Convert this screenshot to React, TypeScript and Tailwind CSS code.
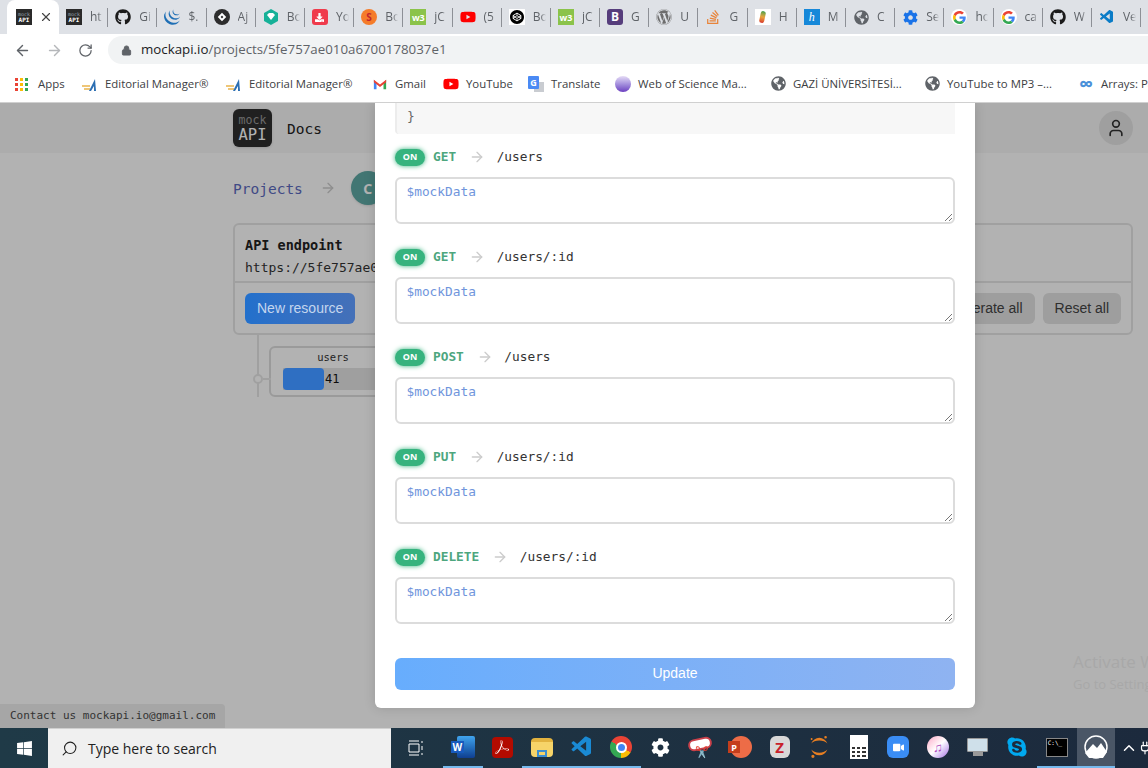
import { ReactNode } from "react";
import { ArrowRight, ArrowLeft, RotateCw, Lock, X, User, ChevronUp, Search, Plug } from "lucide-react";
import { FaGithub, FaYoutube, FaWordpress, FaStackOverflow, FaSkype, FaWindows, FaCog, FaGlobeAmericas, FaVideo, FaDownload } from "react-icons/fa";
import { SiCodepen, SiJquery, SiAdobeacrobatreader, SiJupyter } from "react-icons/si";
import { VscVscode } from "react-icons/vsc";

const chrome = "font-['Open_Sans',sans-serif]";
const mono = "font-['DejaVu_Sans_Mono',monospace]";

function MockLogo({ small = false }: { small?: boolean }) {
   if (small) {
      return (
         <span className={`flex h-4 w-4 flex-col items-center justify-center bg-[#2a2a2a] leading-none ${mono}`}>
            <span className="text-[5px] text-gray-400">mock</span>
            <span className="text-[6px] font-bold text-white">API</span>
         </span>
      );
   }
   return (
      <span className={`flex h-[38px] w-[39px] flex-col items-center justify-center rounded-md bg-[#2f2f2f] shadow ${mono}`}>
         <span className="text-[11.6px] leading-[14px] text-[#9a9a9a]">mock</span>
         <span className="text-[15.5px] leading-[17px] text-white">API</span>
      </span>
   );
}

function W3() {
   return <span className="flex h-4 w-4 items-center justify-center bg-[#8bc34a] text-[9px] font-bold leading-none text-white">w3</span>;
}

function GoogleG() {
   return (
      <span className="flex h-4 w-4 items-center justify-center rounded-full bg-white">
         <svg viewBox="0 0 48 48" className="h-[13px] w-[13px]">
            <path fill="#EA4335" d="M24 9.5c3.5 0 6.700 1.200 9.200 3.600l6.900-6.900C35.900 2.400 30.500 0 24 0 14.600 0 6.500 5.400 2.600 13.200l8 6.200C12.500 13.600 17.800 9.500 24 9.500z" />
            <path fill="#4285F4" d="M47 24.500c0-1.600-.1-3.100-.4-4.500H24v9h12.900c-.6 3-2.200 5.500-4.800 7.200l7.700 6c4.500-4.200 7.200-10.300 7.200-17.700z" />
            <path fill="#FBBC05" d="M10.600 28.600c-.5-1.400-.8-3-.8-4.600s.3-3.200.8-4.600l-8-6.200C.9 16.500 0 20.100 0 24s.9 7.500 2.600 10.800z" />
            <path fill="#34A853" d="M24 48c6.500 0 11.900-2.100 15.800-5.800l-7.700-6c-2.100 1.400-4.900 2.300-8.100 2.300-6.200 0-11.500-4.100-13.400-9.900l-8 6.200C6.500 42.600 14.600 48 24 48z" />
         </svg>
      </span>
   );
}

function EditorialIcon() {
   return (
      <svg viewBox="0 0 16 16" className="h-4 w-4">
         <path d="M0 10h8M2 13h6" stroke="#e9b44c" strokeWidth="1.500" fill="none" />
         <path d="M13 3 7 15h2l3-5v5h2z" fill="#2c6fb3" />
      </svg>
   );
}

function GmailIcon() {
   return (
      <svg viewBox="0 0 16 16" className="h-[14px] w-[14px]">
         <path d="M1 3v11h3V7z" fill="#4285f4" />
         <path d="M15 3v11h-3V7z" fill="#34a853" />
         <path d="M1 3l7 5.500L15 3v3L8 11.500 1 6z" fill="#ea4335" />
      </svg>
   );
}

function TranslateIcon() {
   return (
      <span className="relative block h-4 w-4">
         <span className="absolute bottom-0 right-0 h-[10px] w-[10px] bg-[#c9ccd1]" />
         <span className="absolute left-0 top-0 flex h-[13px] w-[11px] items-center justify-center rounded-[1px] bg-[#4a8af4] text-[9px] font-bold leading-none text-white">G</span>
      </span>
   );
}

const globe = <FaGlobeAmericas className="h-[15px] w-[15px] text-[#5f6368]" />;

const tabs: { icon: ReactNode; text: string }[] = [
   { icon: <MockLogo small />, text: "ht" },
   { icon: <FaGithub className="h-4 w-4 text-[#1b1b1b]" />, text: "Gi" },
   { icon: <SiJquery className="h-4 w-4 text-[#1f6fb5]" />, text: "$." },
   {
      icon: (
         <span className="flex h-4 w-4 items-center justify-center rounded-full bg-[#2d2d2d]">
            <span className="h-[6px] w-[6px] rotate-45 border-2 border-white" />
         </span>
      ),
      text: "Aj",
   },
   {
      icon: (
         <svg viewBox="0 0 16 16" className="h-4 w-4">
            <path d="M8 0l7 4v8l-7 4-7-4V4z" fill="#16b198" />
            <path d="M4 6l2-2h4l2 2-4 5z" fill="#fff" />
         </svg>
      ),
      text: "Bo",
   },
   {
      icon: (
         <span className="flex h-4 w-4 items-center justify-center rounded-[3px] bg-[#ef3b4c]">
            <FaDownload className="h-[9px] w-[9px] text-white" />
         </span>
      ),
      text: "Yo",
   },
   { icon: <span className="flex h-4 w-4 items-center justify-center rounded-full bg-[#f57c2a] text-[10px] font-bold leading-none text-[#c2262e]">S</span>, text: "Bo" },
   { icon: <W3 />, text: "jC" },
   { icon: <FaYoutube className="h-4 w-4 text-[#f00]" />, text: "(5" },
   {
      icon: (
         <span className="flex h-4 w-4 items-center justify-center bg-white">
            <SiCodepen className="h-[14px] w-[14px] text-black" />
         </span>
      ),
      text: "Bo",
   },
   { icon: <W3 />, text: "jC" },
   { icon: <span className="flex h-4 w-4 items-center justify-center rounded-[3px] bg-[#563d7c] text-[12px] font-bold leading-none text-white">B</span>, text: "G" },
   { icon: <FaWordpress className="h-4 w-4 text-[#6d6d6d]" />, text: "U" },
   { icon: <FaStackOverflow className="h-4 w-4 text-[#e8843a]" />, text: "G" },
   {
      icon: (
         <span className="flex h-4 w-4 items-center justify-center bg-white">
            <span className="h-3 w-[5px] rotate-12 rounded-full bg-gradient-to-b from-[#2e9e4b] via-[#e8a33d] to-[#d6322c]" />
         </span>
      ),
      text: "H",
   },
   { icon: <span className="flex h-4 w-4 items-center justify-center bg-[#1688d9] font-['Liberation_Serif',serif] text-[12px] italic leading-none text-white">h</span>, text: "M" },
   { icon: globe, text: "C" },
   { icon: <FaCog className="h-[15px] w-[15px] text-[#1a73e8]" />, text: "Se" },
   { icon: <GoogleG />, text: "ho" },
   { icon: <GoogleG />, text: "ca" },
   { icon: <FaGithub className="h-4 w-4 text-[#1b1b1b]" />, text: "W" },
   { icon: <VscVscode className="h-4 w-4 text-[#0a7cc7]" />, text: "Ve" },
];

const bookmarks: { icon: ReactNode; text: string; width: string }[] = [
   { icon: <EditorialIcon />, text: "Editorial Manager®", width: "w-[144px]" },
   { icon: <EditorialIcon />, text: "Editorial Manager®", width: "w-[146px]" },
   { icon: <GmailIcon />, text: "Gmail", width: "w-[71px]" },
   { icon: <FaYoutube className="h-4 w-4 text-[#f00]" />, text: "YouTube", width: "w-[85px]" },
   { icon: <TranslateIcon />, text: "Translate", width: "w-[87px]" },
   { icon: <span className="h-4 w-4 rounded-full bg-gradient-to-b from-[#e6dcf5] to-[#6d3fc0]" />, text: "Web of Science Ma...", width: "w-[155px]" },
   { icon: globe, text: "GAZİ ÜNİVERSİTESİ...", width: "w-[154px]" },
   { icon: globe, text: "YouTube to MP3 –...", width: "w-[154px]" },
   { icon: <span className="text-[20px] font-bold leading-none text-[#4a90d9]">∞</span>, text: "Arrays: Pa", width: "w-[80px]" },
];

const endpoints = [
   { method: "GET", path: "/users" },
   { method: "GET", path: "/users/:id" },
   { method: "POST", path: "/users" },
   { method: "PUT", path: "/users/:id" },
   { method: "DELETE", path: "/users/:id" },
];

const taskbarIcons: { icon: ReactNode; active?: boolean }[] = [
   {
      icon: (
         <span className="relative block h-[22px] w-[24px]">
            <span className="absolute right-0 top-0 h-full w-[18px] rounded-[2px] bg-gradient-to-b from-[#41a5ee] to-[#103f91]" />
            <span className="absolute left-0 top-[5px] flex h-[12px] w-[13px] items-center justify-center bg-[#185abd] text-[10px] font-bold leading-none text-white">W</span>
         </span>
      ),
      active: true,
   },
   {
      icon: (
         <span className="flex h-[21px] w-[21px] items-center justify-center rounded-[4px] bg-[#b30b00]">
            <SiAdobeacrobatreader className="h-[14px] w-[14px] text-white" />
         </span>
      ),
   },
   {
      icon: (
         <span className="flex h-[19px] w-[22px] items-end justify-center rounded-sm border-t-4 border-[#e2b33f] bg-[#f6d469]">
            <span className="h-[7px] w-[10px] border-2 border-[#3b8ed0]" />
         </span>
      ),
      active: true,
   },
   { icon: <VscVscode className="h-6 w-6 text-[#1a8ad4]" />, active: true },
   {
      icon: (
         <span className="flex h-[22px] w-[22px] items-center justify-center rounded-full bg-[conic-gradient(#ea4335_0_33%,#fbbc05_33%_50%,#34a853_50%_83%,#ea4335_83%_100%)]">
            <span className="box-content h-[7px] w-[7px] rounded-full border-2 border-white bg-[#4285f4]" />
         </span>
      ),
      active: true,
   },
   { icon: <FaCog className="h-[19px] w-[19px] text-white" /> },
   {
      icon: (
         <span className="relative block h-[20px] w-[24px]">
            <span className="absolute left-0 top-[1px] h-[12px] w-[24px] -rotate-12 rounded-full border-2 border-[#c9404a] bg-white" />
            <span className="absolute bottom-0 right-[3px] text-[11px] leading-none text-[#2a9bd8]">✂</span>
         </span>
      ),
   },
   {
      icon: (
         <span className="relative block h-[22px] w-[24px]">
            <span className="absolute right-0 top-0 h-[22px] w-[22px] rounded-full bg-[#ed6c47]" />
            <span className="absolute left-0 top-[5px] flex h-[12px] w-[12px] items-center justify-center bg-[#c43e1c] text-[9px] font-bold leading-none text-white">P</span>
         </span>
      ),
   },
   {
      icon: (
         <span className="flex h-[22px] w-[20px] items-center justify-center rounded-md bg-[#d8d8d8] text-[15px] font-bold leading-none text-[#c8202a]">Z</span>
      ),
   },
   { icon: <SiJupyter className="h-[22px] w-[22px] text-[#e67e22]" /> },
   {
      icon: (
         <span className="flex h-[24px] w-[18px] flex-col justify-end bg-white p-[2px]">
            <span className="grid grid-cols-3 gap-[2px]">
               {Array.from({ length: 9 }).map((_, i) => (
                  <span key={i} className="h-[2px] bg-[#333]" />
               ))}
            </span>
         </span>
      ),
   },
   {
      icon: (
         <span className="flex h-[22px] w-[22px] items-center justify-center rounded-md bg-[#3a8df5]">
            <FaVideo className="h-[11px] w-[11px] text-white" />
         </span>
      ),
   },
   { icon: <span className="flex h-[22px] w-[22px] items-center justify-center rounded-full bg-gradient-to-br from-[#f8a8c8] via-white to-[#a66ee0] text-[13px] leading-none text-[#b04ac0]">♫</span> },
   {
      icon: (
         <span className="flex flex-col items-center">
            <span className="h-[14px] w-[21px] rounded-[1px] border border-[#999] bg-[#cfe0ea]" />
            <span className="h-[4px] w-[10px] bg-[#999]" />
         </span>
      ),
   },
   { icon: <FaSkype className="h-[22px] w-[22px] text-[#00a9f0]" /> },
   { icon: <span className={`flex h-[19px] w-[22px] items-start border border-[#888] bg-black p-[1px] text-[6px] leading-none text-white ${mono}`}>C:\_</span>, active: true },
];

function PageBehind() {
   return (
      <div className="h-full bg-white">
         <div className="flex h-[50px] items-center justify-between bg-[#f6f6f6] pl-[233px] pr-[15px]">
            <div className="flex items-center gap-[15px]">
               <MockLogo />
               <span className={`mt-[3px] text-[14.5px] text-[#222] ${mono}`}>Docs</span>
            </div>
            <span className="flex h-[34px] w-[34px] items-center justify-center rounded-full bg-[#e4e4e4]">
               <User className="h-5 w-5 text-[#333]" />
            </span>
         </div>
         <div className="ml-[233px] mr-[15px]">
            <div className="flex h-[70px] items-center">
               <span className={`mt-[3px] text-[14.5px] text-[#5c6bc0] ${mono}`}>Projects</span>
               <ArrowRight className="ml-[17px] h-4 w-4 text-[#ccc]" />
               <span className="ml-[15px] flex h-[34px] w-[34px] items-center justify-center rounded-full bg-[#5fa9a5] text-[14px] font-bold text-white shadow">C</span>
            </div>
            <div className="rounded-md border-2 border-[#e6e6e6]">
               <div className="h-[58px] border-b-2 border-[#e6e6e6] px-[10px] pt-[10px]">
                  <div className={`text-[13.5px] font-bold leading-[20px] text-[#222] ${mono}`}>API endpoint</div>
                  <div className={`mt-[3px] text-[13px] leading-[20px] text-[#333] ${mono}`}>https://5fe757ae010a6700178037e1.mockapi.io/:endpoint</div>
               </div>
               <div className="flex h-[50px] items-center justify-between px-[10px] font-['Liberation_Sans',sans-serif] text-[14px]">
                  <span className="relative z-10 rounded-md bg-gradient-to-r from-[#2270cc] to-[#4470b8] px-[12px] py-[5px] text-[#c4d6ee]">New resource</span>
                  <span className="flex gap-[8px] text-[#444]">
                     <span className="rounded-md bg-[#e2e2e2] px-[12px] py-[5px]">Generate all</span>
                     <span className="rounded-md bg-[#e2e2e2] px-[12px] py-[5px]">Reset all</span>
                  </span>
               </div>
            </div>
            <div className="ml-[24px] flex h-[62px] items-end">
               <div className="relative h-full w-[12px] border-l-2 border-[#e6e6e6]">
                  <span className="absolute bottom-[13px] left-[-6px] h-[10px] w-[10px] rounded-full border-2 border-[#e6e6e6] bg-white" />
                  <span className="absolute bottom-[17px] left-[4px] h-[2px] w-[8px] bg-[#e6e6e6]" />
               </div>
               <div className="h-[51px] w-[127px] rounded-md border-2 border-[#ddd] pl-[12px]">
                  <div className={`pr-[11px] text-center text-[10.5px] leading-[18px] text-[#333] ${mono}`}>users</div>
                  <div className={`mt-[2px] flex h-[22px] items-center bg-[#e4e4e4] text-[12px] text-[#111] ${mono}`}>
                     <span className="relative z-10 mr-[1px] h-full w-[41px] rounded-sm bg-[#2f6fc2]" />41
                  </div>
               </div>
            </div>
         </div>
      </div>
   );
}

function EndpointRow({ method, path }: { method: string; path: string }) {
   return (
      <div className="mt-[14px]">
         <div className="flex h-[18px] items-center">
            <span className="flex h-[17px] w-[30px] items-center justify-center rounded-full bg-[#36b37e] font-['Noto_Sans',sans-serif] text-[9px] font-bold text-white shadow-[0_0_5px_#36b37e]">ON</span>
            <span className={`ml-[8px] text-[12.8px] font-bold text-[#4da67e] ${mono}`}>{method}</span>
            <ArrowRight className="ml-[13px] h-4 w-4 text-[#ccc]" />
            <span className={`ml-[11.5px] text-[12.8px] text-[#333] ${mono}`}>{path}</span>
         </div>
         <div className="relative mt-[10.5px] h-[47px] rounded-md border-2 border-[#dcdcdc] bg-white px-[9.5px] py-[3px]">
            <div className={`text-[12.8px] leading-[20px] text-[#6f95dc] ${mono}`}>$mockData</div>
            <svg viewBox="0 0 10 10" className="absolute bottom-0 right-0 h-[10px] w-[10px] text-[#777]">
               <path d="M9 2 2 9M9 6 6 9" stroke="currentColor" fill="none" />
            </svg>
         </div>
      </div>
   );
}

function Modal() {
   return (
      <div className="absolute bottom-[20px] left-[375px] top-0 w-[600px] overflow-hidden rounded-b-md bg-white px-[20px] shadow-[0_0_12px_rgba(0,0,0,0.15)]">
         <div className={`h-[31px] overflow-hidden rounded-bl-sm border-l-2 border-[#ececec] bg-[#f7f7f7] px-[10px] text-[12.8px] leading-[20px] text-[#666] ${mono}`}>
            <div className="mt-[-17px] whitespace-pre">{"     y  y      y"}</div>
            <div>{"}"}</div>
         </div>
         {endpoints.map((e, i) => (
            <div key={i} className={i > 0 ? "pt-[10.5px]" : ""}>
               <EndpointRow method={e.method} path={e.path} />
            </div>
         ))}
         <div className="mt-[34px] flex h-[32px] items-center justify-center rounded-md bg-gradient-to-r from-[#67adfd] to-[#8fb3f1] font-['Liberation_Sans',sans-serif] text-[14px] text-white">Update</div>
      </div>
   );
}

export default function App() {
   return (
      <div className="flex h-[768px] w-[1148px] flex-col overflow-hidden">
         <div className={`flex h-[34px] shrink-0 items-center bg-[#dee1e6] pl-[7px] text-[12px] text-[#5f6368] ${chrome}`}>
            <div className="flex h-full w-[52px] items-center gap-[7px] rounded-t-lg bg-white pl-[9px]">
               <MockLogo small />
               <X className="h-[14px] w-[14px] text-[#444]" />
            </div>
            {tabs.map((t, i) => (
               <div key={i} className="flex h-[19px] w-[49.2px] shrink-0 items-center gap-[8px] border-r border-[#8d9096] pl-[7px] first:ml-[8px] first:w-[41px]">
                  <span className="flex h-4 w-4 shrink-0 items-center justify-center overflow-hidden">{t.icon}</span>
                  <span className="w-[13px] overflow-hidden whitespace-nowrap [mask-image:linear-gradient(to_right,black_60%,transparent)]">{t.text}</span>
               </div>
            ))}
         </div>
         <div className={`flex h-[32px] shrink-0 items-center bg-white pl-[14px] ${chrome}`}>
            <ArrowLeft className="h-[17px] w-[17px] text-[#5f6368]" />
            <ArrowRight className="ml-[15px] h-[17px] w-[17px] text-[#b5b7ba]" />
            <RotateCw className="ml-[15px] h-[15px] w-[15px] text-[#5f6368]" />
            <div className="ml-[15px] flex h-[28px] flex-1 items-center rounded-l-full bg-[#f1f3f4] pl-[13px] text-[13.3px]">
               <Lock className="h-[11px] w-[11px] fill-[#5f6368] text-[#5f6368]" />
               <span className="ml-[9px] text-[#202124]">mockapi.io</span>
               <span className="text-[#5f6368]">/projects/5fe757ae010a6700178037e1</span>
            </div>
         </div>
         <div className={`flex h-[37px] shrink-0 items-center whitespace-nowrap border-b border-[#d0d0d0] bg-white pl-[15px] text-[11.4px] text-[#3c4043] ${chrome}`}>
            <span className="grid h-[13px] w-[13px] shrink-0 grid-cols-3 gap-[2px]">
               {Array.from({ length: 9 }).map((_, i) => (
                  <span key={i} className={i % 3 === 0 ? "bg-[#ea4335]" : i % 3 === 1 ? "bg-[#fbbc05]" : "bg-[#34a853]"} />
               ))}
            </span>
            <span className="ml-[10px] w-[44px] shrink-0">Apps</span>
            {bookmarks.map((b, i) => (
               <span key={i} className={`flex shrink-0 items-center gap-[7px] overflow-hidden ${b.width}`}>
                  <span className="flex h-4 w-4 shrink-0 items-center justify-center overflow-hidden">{b.icon}</span>
                  {b.text}
               </span>
            ))}
         </div>
         <div className="relative min-h-0 flex-1 overflow-hidden">
            <PageBehind />
            <div className="absolute inset-0 bg-black/30" />
            <div className={`absolute bottom-0 left-0 h-[24px] w-[225px] rounded-tr-sm bg-[#a6a6a6] pl-[10px] text-[11px] leading-[24px] text-[#333] ${mono}`}>Contact us mockapi.io@gmail.com</div>
            <Modal />
            <div className={`absolute left-[1073px] top-[548px] whitespace-nowrap text-[#a8a8a8] ${chrome}`}>
               <div className="text-[17px] leading-[22px]">Activate Windows</div>
               <div className="text-[13px] leading-[22px]">Go to Settings to activate Windows.</div>
            </div>
         </div>
         <div className="flex h-[40px] shrink-0 items-center overflow-hidden bg-gradient-to-r from-[#1f3a47] to-[#1c2a3d]">
            <span className="flex w-[48px] shrink-0 justify-center">
               <FaWindows className="h-[17px] w-[17px] text-white" />
            </span>
            <div className={`flex h-full w-[343px] shrink-0 items-center border-t border-[#d0d0d0] bg-[#f0f0f0] pl-[13px] text-[14px] text-[#222] ${chrome}`}>
               <Search className="h-[17px] w-[17px] -scale-x-100 text-[#222]" strokeWidth={1.5} />
               <span className="ml-[10px]">Type here to search</span>
            </div>
            <span className="ml-[17px] flex h-full w-[18px] shrink-0 items-center">
               <svg viewBox="0 0 18 16" className="h-[16px] w-[18px] text-white">
                  <path d="M1 1h10M1 15h10M1 4h10v8H1zM14 1v2M14 6v4M14 13v2" stroke="currentColor" fill="none" />
               </svg>
            </span>
            <div className="ml-[17px] flex h-full shrink-0 items-center">
               {taskbarIcons.map((t, i) => (
                  <span key={i} className={`flex h-full w-[39.6px] items-center justify-center border-b-2 ${t.active ? "border-[#76b9ed]" : "border-transparent"}`}>
                     {t.icon}
                  </span>
               ))}
               <span className="flex h-full w-[38px] items-center justify-center border-b-2 border-[#76b9ed] bg-[#4a5666]">
                  <svg viewBox="0 0 24 24" className="h-[24px] w-[24px]">
                     <circle cx="12" cy="12" r="11" fill="none" stroke="#fff" strokeWidth="1.500" />
                     <path d="M1 18 9 9l4 4 4-5 6 9-4 6H5z" fill="#fff" />
                  </svg>
               </span>
               <ChevronUp className="ml-[5px] h-[18px] w-[18px] shrink-0 text-white" />
               <Plug className="h-[14px] w-[14px] shrink-0 text-white" />
            </div>
         </div>
      </div>
   );
}
